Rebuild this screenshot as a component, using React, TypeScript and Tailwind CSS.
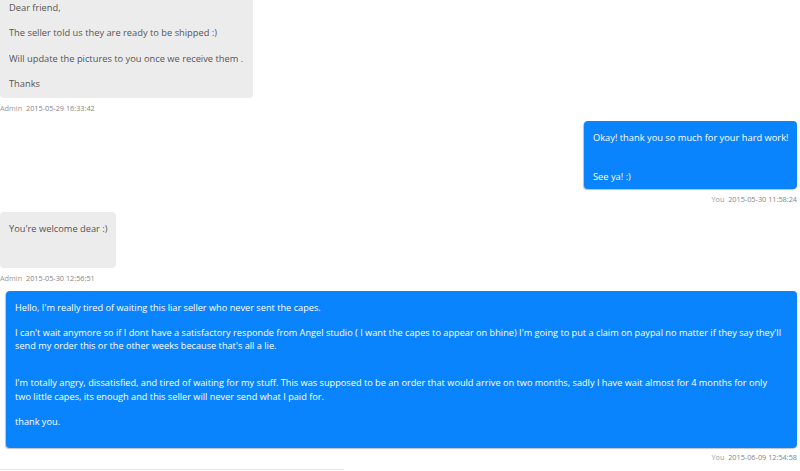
import React from 'react'

type Side = 'admin' | 'you'

function Stamp({ side, who, time }: { side: Side; who: string; time: string }) {
  return (
    <div
      className={`mt-[4.5px] h-[10px] text-[7.3px] leading-[10px] whitespace-nowrap ${
        side === 'you' ? 'text-right' : 'text-left'
      }`}
    >
      <span className="text-[#9a9a9a]">{who}</span>
      <span className="text-[#858585]">{'\u00a0 '}{time}</span>
    </div>
  )
}

export default function App() {
  return (
    <div className="w-[800px] h-[471px] overflow-hidden bg-white font-['Open_Sans',sans-serif] text-[9.3px] leading-[13.33px]">
      <div className="flex flex-col pr-[3px] -mt-[9.3px]">
        {/* Admin message 1 */}
        <div className="self-start">
          <div className="w-[253px] rounded-[4px] bg-[#ececec] px-[9px] pt-[10px] pb-[7.6px] text-[#555]">
            <p className="whitespace-nowrap">Dear friend,</p>
            <p className="mt-[12.2px] whitespace-nowrap">The seller told us they are ready to be shipped :)</p>
            <p className="mt-[12.2px] whitespace-nowrap">Will update the pictures to you once we receive them .</p>
            <p className="mt-[12.2px] whitespace-nowrap">Thanks</p>
          </div>
          <Stamp side="admin" who="Admin" time="2015-05-29 16:33:42" />
        </div>

        {/* You message 1 */}
        <div className="self-end mt-[8.5px]">
          <div className="w-[213px] rounded-[4px] bg-[#0984fd] px-[9px] pt-[10px] pb-[6.3px] text-white shadow-[-1px_1px_1px_rgba(0,0,0,0.25)]">
            <p className="whitespace-nowrap">Okay! thank you so much for your hard work!</p>
            <p className="mt-[25px] whitespace-nowrap">See ya! :)</p>
          </div>
          <Stamp side="you" who="You" time="2015-05-30 11:58:24" />
        </div>

        {/* Admin message 2 */}
        <div className="self-start mt-[8.5px]">
          <div className="w-[116px] rounded-[4px] bg-[#ececec] px-[9px] pt-[10px] pb-[32.7px] text-[#555]">
            <p className="whitespace-nowrap">You're welcome dear :)</p>
          </div>
          <Stamp side="admin" who="Admin" time="2015-05-30 12:56:51" />
        </div>

        {/* You message 2 */}
        <div className="self-end mt-[8.5px] w-[791px]">
          <div className="rounded-[4px] bg-[#0984fd] px-[9px] pt-[10px] pb-[19.7px] text-[9.2px] text-white shadow-[-1px_1px_1px_rgba(0,0,0,0.25)]">
            <p className="whitespace-nowrap">Hello, I'm really tired of waiting this liar seller who never sent the capes.</p>
            <p className="mt-[11.7px]">
              <span className="block whitespace-nowrap">
                I can't wait anymore so if I dont have a satisfactory responde from Angel studio ( I want the capes to appear on bhine) I'm going to put a claim on paypal no matter if they say they'll
              </span>
              <span className="block whitespace-nowrap">send my order this or the other weeks because that's all a lie.</span>
            </p>
            <p className="mt-[23.4px]">
              <span className="block whitespace-nowrap">
                I'm totally angry, dissatisfied, and tired of waiting for my stuff. This was supposed to be an order that would arrive on two months, sadly I have wait almost for 4 months for only
              </span>
              <span className="block whitespace-nowrap">two little capes, its enough and this seller will never send what I paid for.</span>
            </p>
            <p className="mt-[11.7px] whitespace-nowrap">thank you.</p>
          </div>
          <Stamp side="you" who="You" time="2015-06-09 12:54:58" />
        </div>

        {/* reply box edge */}
        <div className="mt-[7px] w-[344px] border-t-[1.5px] border-[#e6e6e6]" />
      </div>
    </div>
  )
}
